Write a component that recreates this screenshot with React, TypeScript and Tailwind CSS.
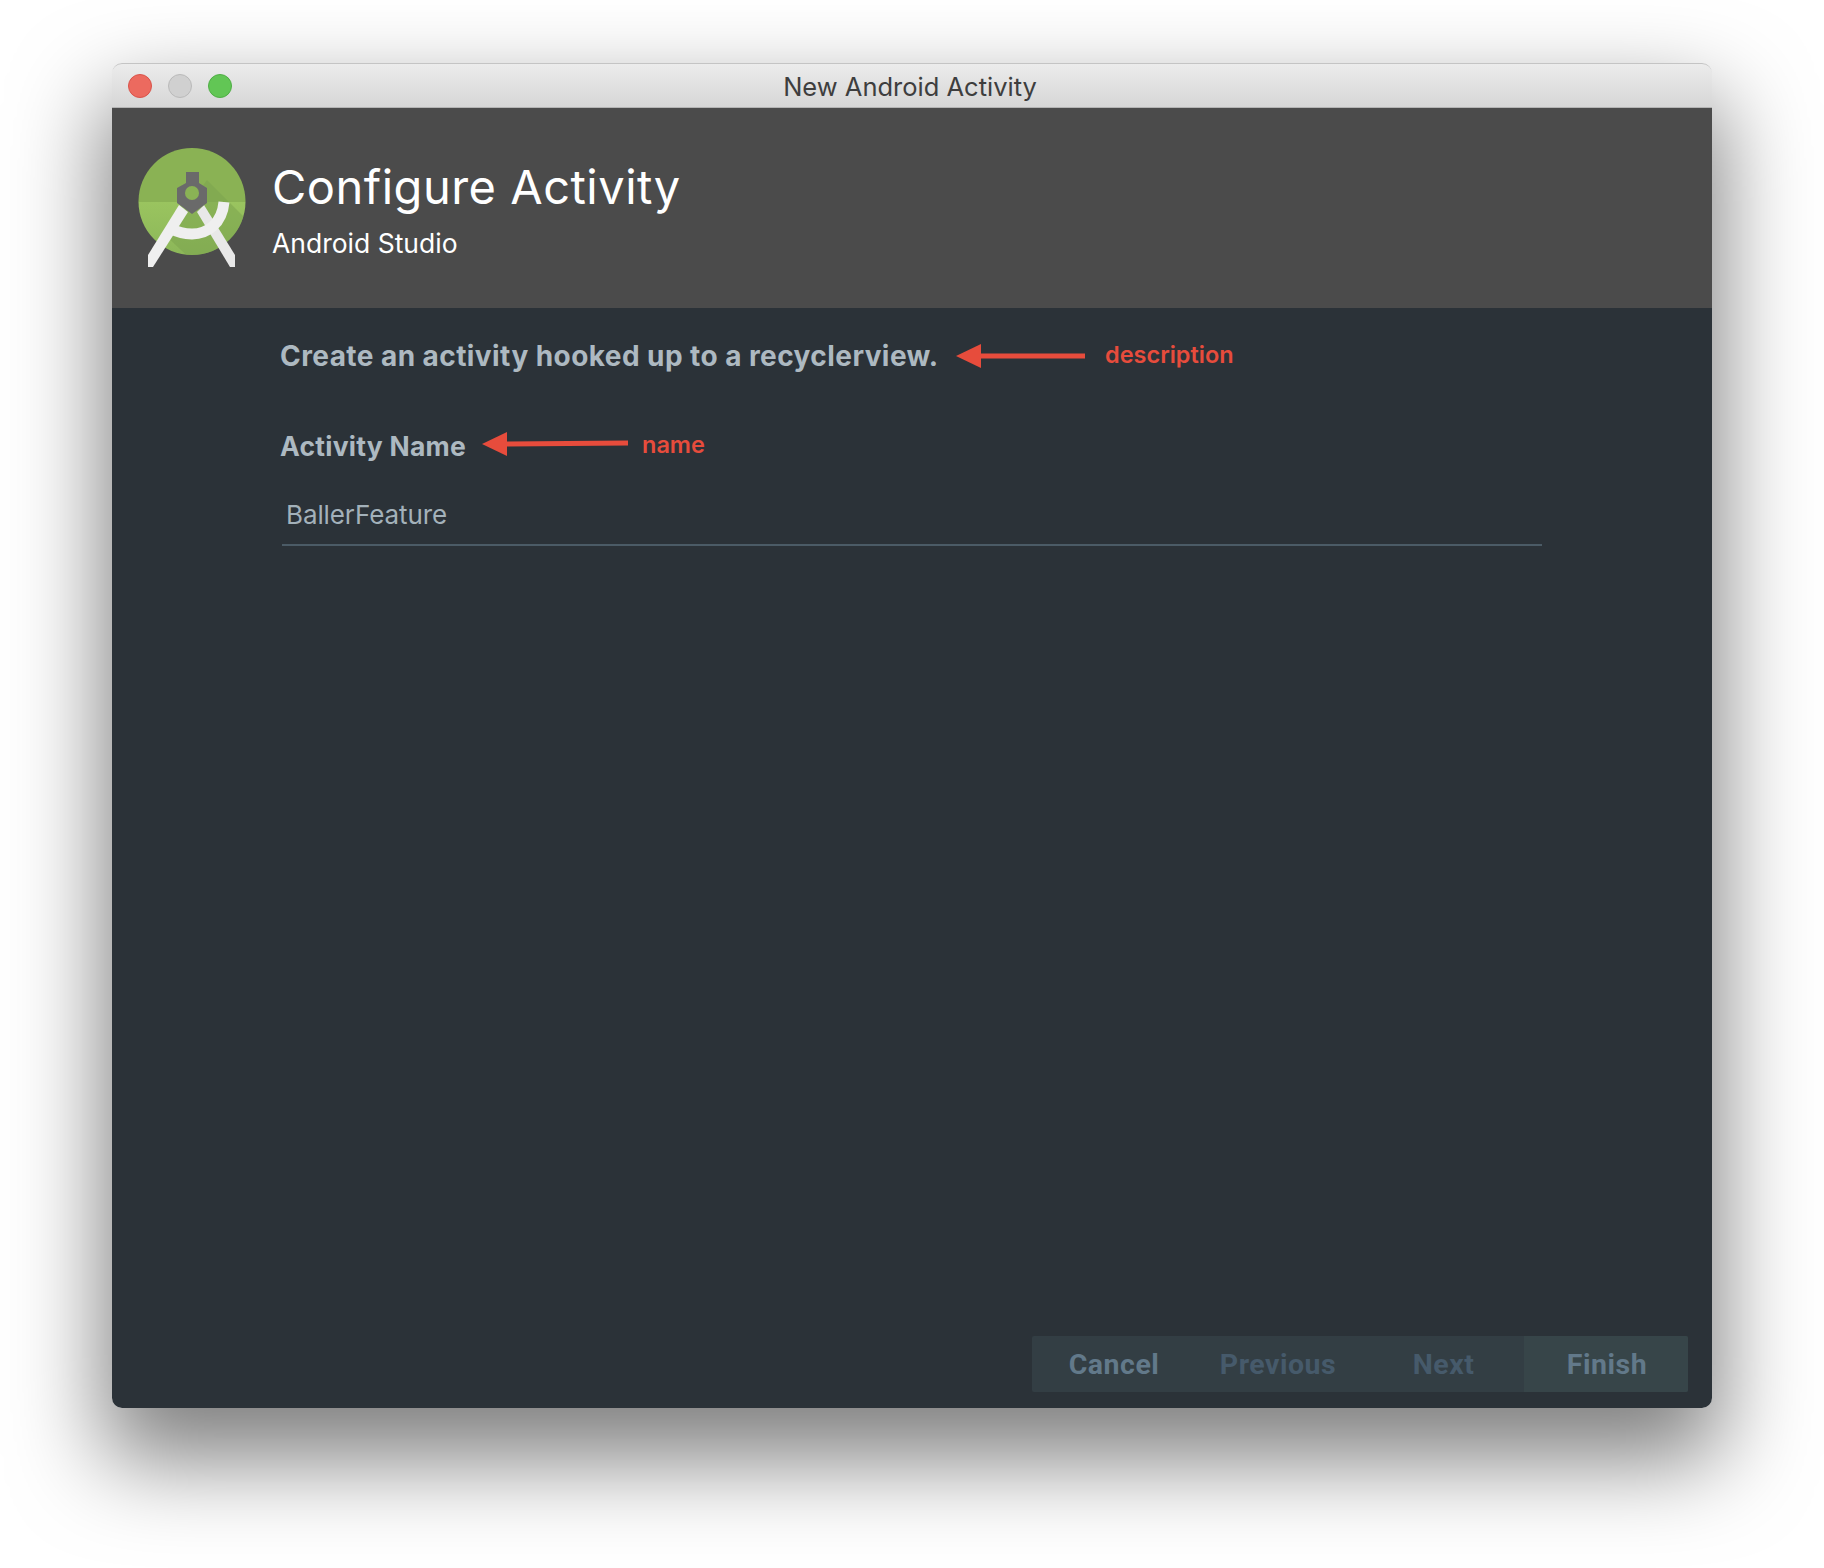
const StudioLogo = () => (
  <svg width="120" height="135" viewBox="0 0 120 135" className="shrink-0">
    <defs>
      <clipPath id="disc">
        <circle cx="57" cy="61.5" r="53.5" />
      </clipPath>
      <linearGradient id="low" x1="0" y1="0" x2="0" y2="1">
        <stop offset="0" stopColor="#9ac45f" />
        <stop offset="1" stopColor="#8ab558" />
      </linearGradient>
      <filter id="soft">
        <feGaussianBlur stdDeviation="0.7" />
      </filter>
    </defs>
    <g clipPath="url(#disc)">
      <rect x="0" y="0" width="120" height="62" fill="#8ab254" />
      <rect x="0" y="62" width="120" height="60" fill="url(#low)" />
      <path d="M72 40 L120 88 L120 125 L62 125 L30 95 L50 70 Z" fill="#7ba44f" opacity="0.55" />
    </g>
    <g filter="url(#soft)">
      <path d="M44 65 L53 72 L18 127 L13 127 L13 115 Z" fill="#efefef" />
      <path d="M69 65 L100 115 L100 127 L95 127 L62 72 Z" fill="#e8e8e8" />
      <path d="M89 62 C87 84 72 94 57 94 C49 94 42 92 35 88" fill="none" stroke="#efefef" strokeWidth="11" />
      <path d="M51 32 H64 V43 L72 48 V63 L57 74 L42 63 V48 L51 43 Z" fill="#6b6b6b" />
      <circle cx="57" cy="53" r="7" fill="#8ab254" />
    </g>
  </svg>
);

const Arrow = ({ width, tilt = 0 }: { width: number; tilt?: number }) => (
  <svg width={width} height="26" viewBox={`0 0 ${width} 26`} className="shrink-0">
    <path d={`M0 13 L25 1 L25 25 Z`} fill="#e74c3c" />
    <path d={`M22 10.5 L${width} ${10.5 - tilt} L${width} ${15.5 - tilt} L22 15.5 Z`} fill="#e74c3c" />
  </svg>
);

const App = () => {
  return (
    <div className="w-[1824px] h-[1568px] bg-white pt-[63px] pl-[112px] font-['Inter',sans-serif] overflow-hidden">
      <div className="w-[1600px] h-[1345px] flex flex-col rounded-[10px] shadow-[0_44px_90px_8px_rgba(0,0,0,0.5)]">
        <div className="h-[45px] shrink-0 flex items-center pl-4 rounded-t-[10px] bg-gradient-to-b from-[#ececec] to-[#d6d6d6] border-t border-[#c4c4c4] border-b-[#b4b4b4] border-b">
          <div className="flex gap-4 w-[104px]">
            <span className="w-6 h-6 rounded-full bg-[#ec6a5f] border border-[#d9534a]" />
            <span className="w-6 h-6 rounded-full bg-[#d0d0d0] border border-[#bababa]" />
            <span className="w-6 h-6 rounded-full bg-[#62c655] border border-[#4fae45]" />
          </div>
          <div className="w-[1356px] pt-[3px] text-center text-[25.5px] leading-none text-[#3e3e3e]">New Android Activity</div>
        </div>

        <div className="h-[200px] shrink-0 bg-[#4b4b4b] flex pl-[23px] pt-8 gap-[17px]">
          <StudioLogo />
          <div className="text-white pt-[19px]">
            <div className="text-[47px] leading-[56px] tracking-[0.5px]">Configure Activity</div>
            <div className="text-[26.5px] leading-[32px] mt-[12px]">Android Studio</div>
          </div>
        </div>

        <div className="flex-1 bg-[#2b3238] rounded-b-[10px] flex flex-col pl-[168px] pr-[24px] pb-4">
          <div className="flex items-center h-[36px] mt-[30px]">
            <span className="text-[28px] font-bold tracking-[0.43px] text-[#adb9c1] w-[676px] whitespace-nowrap">Create an activity hooked up to a recyclerview.</span>
            <Arrow width={129} />
            <span className="text-[23.5px] font-semibold text-[#e74c3c] ml-[20px] -mt-[2px]">description</span>
          </div>
          <div className="flex items-center h-[36px] mt-[52px]">
            <span className="text-[26.5px] font-bold tracking-[0.25px] text-[#adb9c1] w-[202px] whitespace-nowrap pt-[6px]">Activity Name</span>
            <Arrow width={146} tilt={1} />
            <span className="text-[23.5px] font-semibold text-[#e74c3c] ml-[14px] pt-[2px]">name</span>
          </div>
          <div className="w-[1260px] h-[57px] ml-[2px] mt-[27px] pl-1 pb-[5px] border-b-2 border-[#4b5b66] flex items-center text-[26px] tracking-[-0.1px] text-[#a3b1ba]">
            BallerFeature
          </div>

          <div className="mt-auto self-end grid grid-cols-4 w-[656px] h-14 rounded-[2px] bg-[#333e44] font-['Roboto',sans-serif] font-bold text-[28.5px] tracking-[0.5px]">
            <span className="flex items-center justify-center pt-[2px] text-[#62798a]">Cancel</span>
            <span className="flex items-center justify-center pt-[2px] text-[#465a6b]">Previous</span>
            <span className="flex items-center justify-center pt-[2px] pl-[3px] text-[#465a6b]">Next</span>
            <span className="flex items-center justify-center pt-[2px] pl-[2px] text-[#62798a] bg-[#374549] rounded-r-[2px]">Finish</span>
          </div>
        </div>
      </div>
    </div>
  );
};

export default App;
